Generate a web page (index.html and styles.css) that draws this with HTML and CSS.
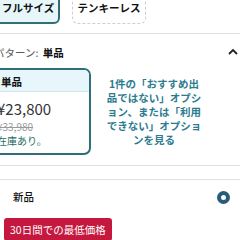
FILE: index.html
```html
<!DOCTYPE html>
<html>

<head>
    <meta charset="utf-8">
    <title>商品オプション</title>
    <link rel="stylesheet" href="styles.css">
</head>

<body>
    <div class="page">
        <div class="chips">
            <div class="chip chip-on">フルサイズ</div>
            <div class="chip chip-off">テンキーレス</div>
        </div>

        <div class="variation">
            <div class="var-label">パターン: <b>単品</b></div>
            <svg class="caret" width="10" height="7" viewBox="0 0 10 7">
                <polyline points="1,6 5,2 9,6" fill="none" stroke="#222" stroke-width="1.8" />
            </svg>
        </div>

        <div class="options">
            <div class="card">
                <div class="card-head">単品</div>
                <div class="card-body">
                    <div class="price">¥23,800</div>
                    <div class="was">¥33,980</div>
                    <div class="stock">在庫あり。</div>
                </div>
            </div>
            <div class="other-link">1件の「おすすめ出品ではない」オプション、または「利用できない」オプションを見る</div>
        </div>

        <div class="divider"></div>

        <div class="offer">
            <div class="offer-name">新品</div>
            <div class="radio"></div>
        </div>

        <div class="deal">30日間での最低価格</div>
    </div>
</body>

</html>
```

FILE: styles.css
```css
body {
    margin: 0;
    overflow: hidden;
    background: #fff;
    color: #0f1111;
    font-family: "Noto Sans CJK JP", "Noto Sans", sans-serif;
    font-size: 10.5px;
}

.page {
    margin-left: -10px;
    width: 250px;
}

.chips {
    display: flex;
    gap: 12px;
    margin-top: -8px;
    padding-bottom: 9px;
    border-bottom: 1px solid #e3e3e3;
}

.chip {
    height: 32px;
    box-sizing: border-box;
    display: flex;
    align-items: center;
    font-weight: bold;
    line-height: 14px;
    border-radius: 6px;
}

.chip-on {
    width: 70px;
    padding-left: 10px;
    border: 2px solid #2f6f78;
    background: #e6f6f9;
}

.chip-off {
    width: 74px;
    justify-content: center;
    border: 1.5px dashed #cfcfcf;
}

.variation {
    display: flex;
    justify-content: space-between;
    align-items: center;
    padding: 12px 2px 0 4px;
    line-height: 14px;
}

.var-label {
    color: #565959;
}

.var-label b {
    color: #0f1111;
    margin-left: 2px;
}

.caret {
    margin-top: -4px;
}

.options {
    display: flex;
    gap: 15px;
    margin-top: 8px;
}

.card {
    width: 101px;
    box-sizing: border-box;
    border: 2px solid #2f6f78;
    border-radius: 7px;
    overflow: hidden;
}

.card-head {
    height: 22px;
    display: flex;
    align-items: center;
    padding-left: 9px;
    padding-top: 2px;
    box-sizing: border-box;
    font-weight: bold;
    background: #e6f6fa;
    border-bottom: 1px solid #d3e6ea;
}

.card-body {
    padding: 6px 0 5px 5px;
}

.price {
    font-size: 15px;
    line-height: 22px;
    color: #333;
}

.was {
    font-size: 10px;
    line-height: 14px;
    color: #9a9a9a;
    text-decoration: line-through;
}

.stock {
    font-size: 10px;
    line-height: 14px;
    color: #2b6e66;
}

.other-link {
    width: 96px;
    margin-top: 9px;
    text-align: center;
    font-weight: bold;
    line-height: 14px;
    color: #2c7c8f;
}

.divider {
    height: 13px;
    margin-top: 10px;
    border-top: 1px solid #e0e0e0;
    border-bottom: 1px solid #e0e0e0;
}

.offer {
    display: flex;
    justify-content: space-between;
    align-items: center;
    padding: 10px 10px 0 23px;
    line-height: 14px;
}

.offer-name {
    font-weight: 500;
}

.radio {
    width: 13px;
    height: 13px;
    box-sizing: border-box;
    border: 4px solid #275c7c;
    border-radius: 50%;
    background: #fff;
}

.deal {
    display: inline-block;
    margin: 14px 0 0 14px;
    padding: 4px 6px;
    border-radius: 3px;
    background: #c5183f;
    color: #fff;
    font-size: 10.5px;
    line-height: 15px;
}
```
